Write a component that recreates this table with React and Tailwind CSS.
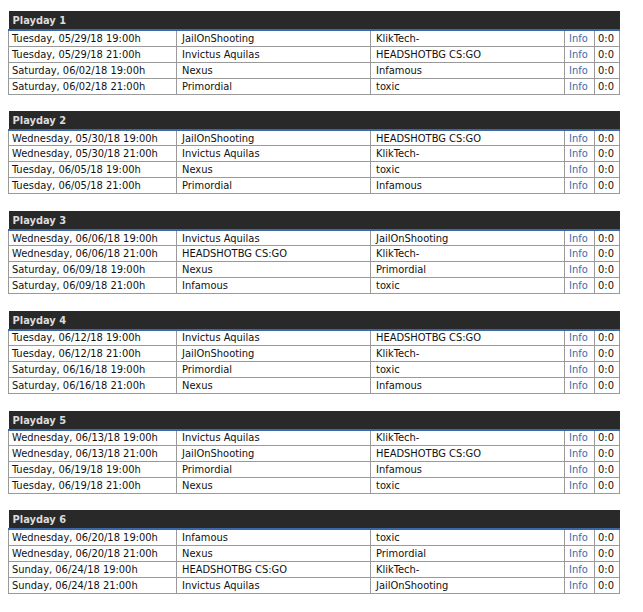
const PLAYDAYS = [
  [
    ["Tuesday, 05/29/18 19:00h", "JailOnShooting", "KlikTech-"],
    ["Tuesday, 05/29/18 21:00h", "Invictus Aquilas", "HEADSHOTBG CS:GO"],
    ["Saturday, 06/02/18 19:00h", "Nexus", "Infamous"],
    ["Saturday, 06/02/18 21:00h", "Primordial", "toxic"],
  ],
  [
    ["Wednesday, 05/30/18 19:00h", "JailOnShooting", "HEADSHOTBG CS:GO"],
    ["Wednesday, 05/30/18 21:00h", "Invictus Aquilas", "KlikTech-"],
    ["Tuesday, 06/05/18 19:00h", "Nexus", "toxic"],
    ["Tuesday, 06/05/18 21:00h", "Primordial", "Infamous"],
  ],
  [
    ["Wednesday, 06/06/18 19:00h", "Invictus Aquilas", "JailOnShooting"],
    ["Wednesday, 06/06/18 21:00h", "HEADSHOTBG CS:GO", "KlikTech-"],
    ["Saturday, 06/09/18 19:00h", "Nexus", "Primordial"],
    ["Saturday, 06/09/18 21:00h", "Infamous", "toxic"],
  ],
  [
    ["Tuesday, 06/12/18 19:00h", "Invictus Aquilas", "HEADSHOTBG CS:GO"],
    ["Tuesday, 06/12/18 21:00h", "JailOnShooting", "KlikTech-"],
    ["Saturday, 06/16/18 19:00h", "Primordial", "toxic"],
    ["Saturday, 06/16/18 21:00h", "Nexus", "Infamous"],
  ],
  [
    ["Wednesday, 06/13/18 19:00h", "Invictus Aquilas", "KlikTech-"],
    ["Wednesday, 06/13/18 21:00h", "JailOnShooting", "HEADSHOTBG CS:GO"],
    ["Tuesday, 06/19/18 19:00h", "Primordial", "Infamous"],
    ["Tuesday, 06/19/18 21:00h", "Nexus", "toxic"],
  ],
  [
    ["Wednesday, 06/20/18 19:00h", "Infamous", "toxic"],
    ["Wednesday, 06/20/18 21:00h", "Nexus", "Primordial"],
    ["Sunday, 06/24/18 19:00h", "HEADSHOTBG CS:GO", "KlikTech-"],
    ["Sunday, 06/24/18 21:00h", "Invictus Aquilas", "JailOnShooting"],
  ],
];

function Playday({ n, games }) {
  return (
    <table className="w-[611px] table-fixed border-collapse text-[11px] leading-none">
      <colgroup>
        <col className="w-[168px]" />
        <col className="w-[194px]" />
        <col className="w-[194px]" />
        <col className="w-[30px]" />
        <col className="w-[25px]" />
      </colgroup>
      <thead>
        <tr>
          <th colSpan={5} className="h-[19px] bg-[#292929] border-b-2 border-[#3b68a8] text-left pl-[4px] pt-[1px] font-bold text-[#dcdcdc]">
            Playday {n}
          </th>
        </tr>
      </thead>
      <tbody>
        {games.map((g, i) => (
          <tr key={i} className="h-[16px]">
            <td className="border border-[#9a9a9a] pl-[3px] text-[#111] whitespace-nowrap">{g[0]}</td>
            <td className="border border-[#9a9a9a] pl-[5px] text-[#111] whitespace-nowrap">{g[1]}</td>
            <td className="border border-[#9a9a9a] pl-[5px] text-[#111] whitespace-nowrap">{g[2]}</td>
            <td className="border border-[#9a9a9a] pl-[4px] text-[#3f68a8]">Info</td>
            <td className="border border-[#9a9a9a] pl-[3px] text-[#111]">0:0</td>
          </tr>
        ))}
      </tbody>
    </table>
  );
}

export default function App() {
  return (
    <div className="bg-white min-h-[612px] pl-[8px] pt-[11px] font-['DejaVu_Sans_Condensed','DejaVu_Sans',sans-serif]">
      <div className="flex flex-col gap-[16.4px]">
        {PLAYDAYS.map((games, i) => (
          <Playday key={i} n={i + 1} games={games} />
        ))}
      </div>
    </div>
  );
}
